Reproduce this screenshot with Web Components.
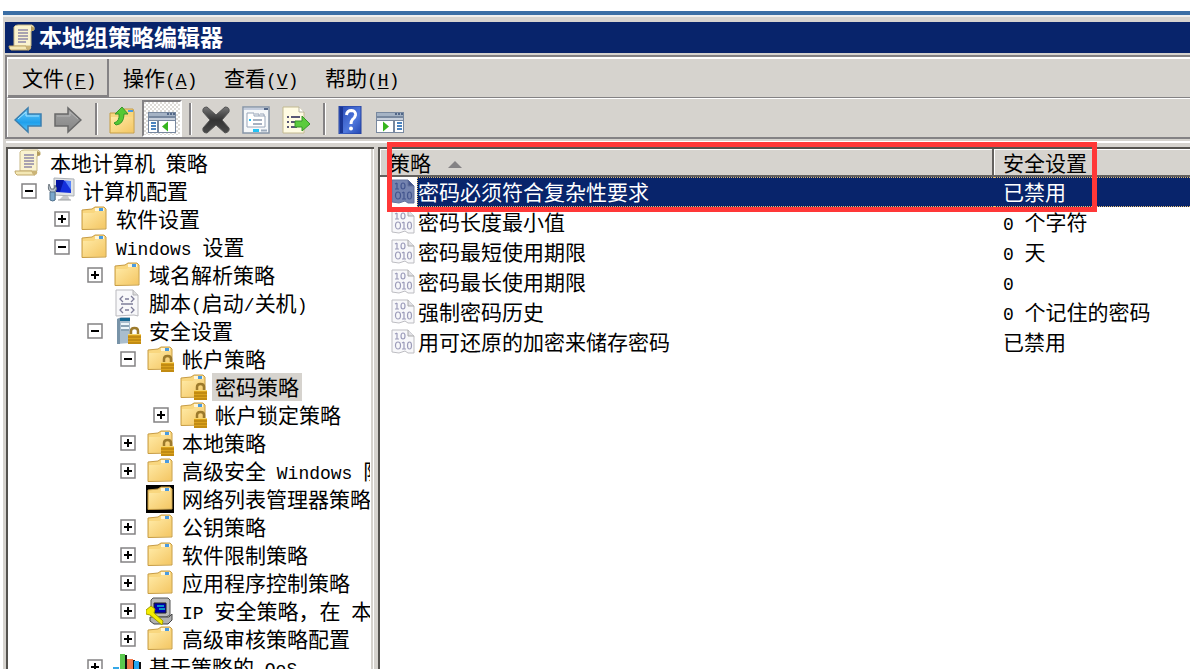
<!DOCTYPE html>
<html lang="zh-CN">
<head>
<meta charset="utf-8">
<title>本地组策略编辑器</title>
<style>
  html, body { margin: 0; height: 100%; background: #fff; }
  body {
    overflow: hidden;
    font: 21px/28px "Noto Sans CJK SC", sans-serif;
    color: #000;
    --face: #d6d3ce;
    --shadow: #848284;
    --navy: #08246b;
  }
</style>
</head>
<body>
<mmc-window>
  <title-bar slot="title">本地组策略编辑器</title-bar>
  <menu-bar slot="menu">
    <menu-item raised key="F">文件</menu-item>
    <menu-item key="A">操作</menu-item>
    <menu-item key="V">查看</menu-item>
    <menu-item key="H">帮助</menu-item>
  </menu-bar>
  <tool-bar slot="tools">
    <tool-button icon="back" label="后退"></tool-button>
    <tool-button icon="forward" label="前进"></tool-button>
    <tool-separator></tool-separator>
    <tool-button icon="up" label="上一级"></tool-button>
    <tool-button icon="treepane" label="显示控制台树" pressed></tool-button>
    <tool-separator></tool-separator>
    <tool-button icon="delete" label="删除"></tool-button>
    <tool-button icon="props" label="属性"></tool-button>
    <tool-button icon="export" label="导出列表"></tool-button>
    <tool-separator></tool-separator>
    <tool-button icon="help" label="帮助"></tool-button>
    <tool-button icon="actionpane" label="显示操作窗格"></tool-button>
  </tool-bar>
  <console-tree slot="tree">
    <tree-node level="0" icon="scroll">本地计算机 策略</tree-node>
    <tree-node level="1" icon="computer" state="open">计算机配置</tree-node>
    <tree-node level="2" icon="folder" state="closed">软件设置</tree-node>
    <tree-node level="2" icon="folder" state="open">Windows 设置</tree-node>
    <tree-node level="3" icon="folder" state="closed">域名解析策略</tree-node>
    <tree-node level="3" icon="script">脚本(启动/关机)</tree-node>
    <tree-node level="3" icon="server" state="open">安全设置</tree-node>
    <tree-node level="4" icon="locked" state="open">帐户策略</tree-node>
    <tree-node level="5" icon="locked" selected>密码策略</tree-node>
    <tree-node level="5" icon="locked" state="closed">帐户锁定策略</tree-node>
    <tree-node level="4" icon="locked" state="closed">本地策略</tree-node>
    <tree-node level="4" icon="folder" state="closed">高级安全 Windows 防</tree-node>
    <tree-node level="4" icon="blackfolder">网络列表管理器策略</tree-node>
    <tree-node level="4" icon="folder" state="closed">公钥策略</tree-node>
    <tree-node level="4" icon="folder" state="closed">软件限制策略</tree-node>
    <tree-node level="4" icon="folder" state="closed">应用程序控制策略</tree-node>
    <tree-node level="4" icon="ipsec" state="closed">IP 安全策略，在 本</tree-node>
    <tree-node level="4" icon="folder" state="closed">高级审核策略配置</tree-node>
    <tree-node level="3" icon="chart" state="closed">基于策略的 QoS</tree-node>
  </console-tree>
  <policy-list slot="list"></policy-list>
</mmc-window>

<script>
const folderBody = `
  <path d="M2 5 L12 4 L15 2 H24 L26 4 V24 L2 24.500 Z" fill="#f9d77f" stroke="#c79c45"/>
  <path d="M3 8 H14 L16 6 H25 V23 H3 Z" fill="url(#fg)"/>
  <path d="M15 3 H24 V6 H15 Z" fill="#fff6d8"/><path d="M19 3 H23 V6 H19 Z" fill="#4a9be0"/>`;
const padlock = `
  <path d="M18 18 V14 Q18 11 21.500 11 Q25 11 25 14 V18" fill="none" stroke="#9c7a2c" stroke-width="2.500"/>
  <path d="M15 17 H28 V27 H15 Z" fill="#dba21c"/><path d="M15 20 H28 M15 23 H28 M15 26 H28" stroke="#a87408"/>
  <path d="M15 17.500 H28" stroke="#f7d66a"/>`;
const binaryPage = `
  <path d="M3 2 H19 L25 8 V25 H19 L16 23 L10 25 L3 24 Z" fill="var(--page,#f8f8fa)" stroke="var(--edge,#bdbdc2)"/>
  <path d="M19 2 V8 H25" fill="var(--fold,#e2e2e6)" stroke="var(--edge,#aaa)"/>
  <g fill="none" stroke="var(--ink,#9c9cba)" stroke-width="1.200">
    <path d="M8 5 V11 M6 6 L8 5 M6 11 H10 M15 14 V21 M13 15 L15 14 M13 21 H17"/>
    <ellipse cx="14" cy="8" rx="2" ry="3"/><ellipse cx="9" cy="17.500" rx="2.500" ry="3.500"/><ellipse cx="20.500" cy="17.500" rx="2" ry="3.500"/>
  </g>`;
const scrollArt = `
  <path d="M6 3 Q7 1 10 1 H24 Q27 2 26 6 L23 7 V22 H6 Z" fill="#faf3cf" stroke="#c9b987"/>
  <path d="M23 2 Q27 3 26 6 L23 7 Z" fill="#b59c5c"/>
  <path d="M1 22 H18 Q18 25 21 26 H3 Q1 25 1 22 Z" fill="#f4e8b5" stroke="#c0a769"/>
  <path d="M18 22 H23 Q24 25 21 26 Q18 25 18 22" fill="#cbb477"/>
  <path d="M10 6 H20 M10 9 H20 M10 12 H20 M10 15 H20 M10 18 H18" stroke="#8e89a8" stroke-width="1.500"/>`;
const paneWindow = `
  <path d="M0 6 H28 V27 H0 Z" fill="#78889f"/><path d="M1 7 H27 V10 H1 Z" fill="#a5b3c5"/>
  <path d="M19 8 H21 M22 8 H24 M25 8 H27" stroke="#526788" stroke-width="2"/>
  <path d="M1 12 H27 V14 H1 Z" fill="#c8d0dc"/>`;

const ICONS = {
  scroll: scrollArt,
  folder: folderBody,
  locked: folderBody + padlock,
  blackfolder: `<path d="M0 0 H28 V28 H0 Z"/>` + folderBody,
  computer: `
    <path d="M7 1 L27 2 V19 L7 18 Z" fill="#dfe2e4" stroke="#abb0b5"/>
    <path d="M9 3 L24 4 V16 L9 15 Z" fill="#1430dc"/><path d="M9 3 H17 L13 15 H9 Z" fill="#0514a2"/><path d="M18 4 L24 4 V13 Z" fill="#5985fa"/>
    <path d="M16 19 H21 L23 23 H12 Z" fill="#c6c8ca"/><path d="M11 23 H24" stroke="#9a9da0"/>
    <path d="M2 7 Q0 13 4 15 V23 H8 V15 Q11 12 8 8 L7 12 H4 Z" fill="#bcc5cc" stroke="#6d7780"/>
    <path d="M3 15 H8 V23 Q6 25 3 23 Z" fill="#7ba7cb" stroke="#52738f"/>`,
  script: `
    <path d="M3 1 H20 L25 6 V27 L21 26 L3 27 Z" fill="#f8f8fa" stroke="#b9b9be"/><path d="M20 1 V6 H25" fill="#ddd" stroke="#b4b4b8"/>
    <path d="M10 7 L7 10 L10 13 M18 7 L21 10 L18 13 M12 10 H16 M8 15 H20 M10 18 L7 21 L10 24 M18 18 L21 21 L18 24 M12 21 H16" fill="none" stroke="#7e7d99" stroke-width="1.300"/>`,
  server: `
    <path d="M4 2 L8 0 H17 V26 L4 27 Z" fill="#a9bdcd"/><path d="M4 2 L7 1 V27 H4 Z" fill="#7893a8"/><path d="M7 1 H17 V4 H7 Z" fill="#176993"/>
    <path d="M8 7 H16 M8 11 H16" stroke="#edf6fa" stroke-width="2"/><path d="M8 9 H16 M8 13 H16" stroke="#6b879b"/>` + padlock,
  ipsec: `
    <path d="M7 1 H22 L24 3 V18 L20 20 H7 L5 17 V3 Z" fill="#b9b9b9" stroke="#555"/>
    <path d="M8 6 H20 V16 H8 Z" fill="#0000b0" stroke="#222"/><path d="M11 9 H18 M13 12 H19" stroke="#0a8fc8" stroke-width="2"/>
    <path d="M4 20 H23 L26 17 V23 L22 27 H8 L4 24 Z" fill="#b0b0b0" stroke="#444"/>
    <path d="M0 13 L5 9 L9 12 L8 16 L17 24 L16 28 L4 18 L0 17 Z" fill="#f4ec00" stroke="#a29b00"/>`,
  chart: `
    <path d="M0 14 H6 V28 H0 Z" fill="#35a8e8"/><path d="M12 2 H14 V28 H12 Z M20 7 H22 V28 H20 Z M26 9 H28 V28 H26 Z" fill="#111"/>
    <path d="M7 1 H12 V28 H7 Z" fill="#5bc84e"/><path d="M14 6 H20 V28 H14 Z" fill="#f0784c"/><path d="M21 8 H26 V28 H21 Z" fill="#25a5ef"/>`,
  binary: binaryPage,
  back: `<path d="M1 14 L14 2 V8 H27 V20 H14 V26 Z" fill="url(#bl)" stroke="#3c7fae" stroke-width="1.500"/><path d="M4 13 L12 6 V10 H25" fill="none" stroke="#a4e2ff"/>`,
  forward: `<path d="M27 14 L14 2 V8 H1 V20 H14 V26 Z" fill="url(#gr)" stroke="#696969" stroke-width="1.500"/><path d="M3 10 H16 V6 L24 13" fill="none" stroke="#b5b5b5"/>`,
  up: `<path d="M2 7 H13 L16 3 H25 L26 6 V27 H2 Z" fill="#f7d77f" stroke="#c79c45"/><path d="M3 11 H25 V26 H3 Z" fill="url(#fg)"/>
    <path d="M20 5 H25" stroke="#4a9be0" stroke-width="2"/>
    <path d="M6 17 Q12 15 11 8 H7 L14 1 L20 8 H16 Q16 18 8 19 Z" fill="#54c934" stroke="#38952a"/>`,
  treepane: paneWindow + `
    <path d="M1 15 H9 V26 H1 Z M11 15 H27 V26 H11 Z" fill="#fff"/><path d="M3 17 H8 M3 20 H8 M3 23 H8" stroke="#4b83bf" stroke-width="2"/>
    <path d="M14 20.500 L20 15.500 V25.500 Z" fill="#36b51d"/>`,
  actionpane: paneWindow + `
    <path d="M1 15 H17 V26 H1 Z M19 15 H27 V26 H19 Z" fill="#fff"/><path d="M21 17 H26 M21 20 H26 M21 23 H26" stroke="#4b83bf" stroke-width="2"/>
    <path d="M13 20.500 L7 15.500 V25.500 Z" fill="#36b51d"/>`,
  delete: `<path d="M5 1 L14 9 L23 1 Q28 1 27 6 L20 14 L27 22 Q28 26 23 27 L14 19 L5 27 Q0 27 1 22 L8 14 L1 6 Q0 1 5 1 Z" fill="url(#dk)" stroke="#555" stroke-linejoin="round"/>`,
  props: `<path d="M1 1 H27 V27 H1 Z" fill="#f6f8fa" stroke="#8795a8" stroke-width="1.500"/><path d="M2 3 H26" stroke="#c5cddd" stroke-width="2"/><path d="M22 3 H26" stroke="#536687" stroke-width="2"/>
    <path d="M5 7 H12 V10 H23 V21 H5 Z" fill="#fff" stroke="#98a5b8"/><path d="M13 8 H17 V10 M18 8 H22 V10" fill="none" stroke="#98a5b8"/>
    <path d="M7 14 H9" stroke="#28bdf0" stroke-width="2"/><path d="M11 14 H20 M11 18 H20" stroke="#8a98ad" stroke-width="1.500"/>
    <path d="M11 24.500 H17" stroke="#22c3f5" stroke-width="3"/><path d="M19 24.500 H25" stroke="#9cabbd" stroke-width="2"/>`,
  export: `<path d="M1 1 H17 L22 6 V27 H1 Z" fill="#fffbe3" stroke="#c3b98f"/><path d="M17 1 V6 H22" fill="#fff" stroke="#b5b09c"/>
    <path d="M5 11 H7 M5 16 H7 M5 21 H7 M9 11 H18 M9 16 H15 M9 21 H15" stroke="#595675" stroke-width="2"/>
    <path d="M13 15 H20 V10 L28 18 L20 25 V21 H13 Z" fill="#5bcb3d" stroke="#37942a"/>`,
  help: `<path d="M3 0 H25 V28 H3 Z" fill="url(#hp)" stroke="#24409c"/><path d="M4 1 H7 V27 H4 Z" fill="#1a3694"/>
    <path d="M10.500 9 Q11 4.500 15.500 4.500 Q20 5 19.500 9 Q19 12 16.500 13.500 Q15 15 15 18" fill="none" stroke="#fff" stroke-width="3"/><circle cx="15" cy="22.500" r="2" fill="#fff"/>`
};

const GRADIENTS = `<defs>
  <linearGradient id="fg" x1="0" y1="0" x2="1" y2="1"><stop stop-color="#ffeaa6"/><stop offset="1" stop-color="#f4c765"/></linearGradient>
  <linearGradient id="bl" x1="0" y1="0" x2="0" y2="1"><stop stop-color="#6bcbfa"/><stop offset=".6" stop-color="#1fa0ec"/><stop offset="1" stop-color="#5ac7fa"/></linearGradient>
  <linearGradient id="gr" x1="0" y1="0" x2="0" y2="1"><stop stop-color="#a2a2a2"/><stop offset="1" stop-color="#858585"/></linearGradient>
  <linearGradient id="dk" x1="0" y1="0" x2="0" y2="1"><stop stop-color="#777"/><stop offset=".5" stop-color="#333"/><stop offset="1" stop-color="#4a4a4a"/></linearGradient>
  <linearGradient id="hp" x1="0" y1="0" x2="1" y2="1"><stop stop-color="#2748b4"/><stop offset=".6" stop-color="#4f78dd"/><stop offset="1" stop-color="#2347b2"/></linearGradient>
</defs>`;

/* Half-width characters are set in a monospaced face, about half an ideograph wide. */
const LATIN = `.latin { font: 18px/1 "Liberation Mono", monospace; white-space: pre; }`;
const mixed = text => text.replace(/[\x20-\x7e]+/g, run => `<span class="latin">${run}</span>`);

function define(name, render) {
  customElements.define(name, class extends HTMLElement {
    connectedCallback() {
      if (this.shadowRoot) return;
      const template = document.createElement('template');
      template.innerHTML = render(this);
      this.attachShadow({ mode: 'open' }).append(template.content.cloneNode(true));
    }
  });
}

define('app-icon', el => `
  <style>:host { display: block; flex: none; width: 28px; height: 28px; } svg { display: block; width: 100%; height: 100%; }</style>
  <svg viewBox="0 0 28 28" aria-hidden="true">${GRADIENTS}${ICONS[el.getAttribute('name')]}</svg>`);

define('mmc-window', () => `
  <style>
    :host { display: flex; flex-direction: column; box-sizing: border-box; height: 100vh; padding: 11px 0 2px 3px; overflow: hidden; }
    .edge { flex: none; height: 4px; background: #3a6ea5; border-bottom: 2px solid #efefee; }
    .frame { flex: 1; min-height: 0; display: flex; flex-direction: column; background: var(--face); padding: 5px 0 0 2px; }
    .bars { flex: none; margin-top: 2px; border: solid var(--shadow); border-width: 2px 0 2px 2px; }
    .panes { flex: 1; min-height: 0; display: grid; grid-template-columns: 368px minmax(0, 1fr); column-gap: 4px; margin: 2px 0 0 1px; padding-top: 4px; border-top: 2px solid #fff; }
    ::slotted([slot=tree]), ::slotted([slot=list]) { border: solid #55534f; border-width: 2px 0 0 2px; background: #fff; min-width: 0; min-height: 0; }
  </style>
  <div class="edge"></div>
  <div class="frame">
    <slot name="title"></slot>
    <div class="bars"><slot name="menu"></slot><slot name="tools"></slot></div>
    <div class="panes"><slot name="tree"></slot><slot name="list"></slot></div>
  </div>`);

define('title-bar', () => `
  <style>
    :host { display: flex; align-items: center; gap: 3px; flex: none; height: 31px; padding-left: 3px; background: var(--navy); color: #fff; }
    h1 { margin: 0; padding-bottom: 3px; font-size: 23px; line-height: 28px; font-weight: 700; }
  </style>
  <app-icon name="scroll"></app-icon><h1><slot></slot></h1>`);

define('menu-bar', () => `
  <style>:host { display: flex; height: 41px; box-sizing: border-box; border-top: 2px solid #fff; border-left: 1px solid #fff; border-bottom: 1px solid var(--shadow); }</style>
  <slot></slot>`);

define('menu-item', el => `
  <style>
    :host { display: block; }
    button { box-sizing: border-box; min-width: 101px; height: 38px; padding: 0 0 2px 14px; border: 0; background: none; font: inherit; color: inherit; text-align: left; white-space: nowrap; }
    :host([raised]) button { padding-bottom: 0; border: solid var(--shadow); border-width: 0 2px 2px 0; }
    ${LATIN}
    u { text-underline-offset: 2px; }
  </style>
  <button type="button"><slot></slot><span class="latin">(<u>${el.getAttribute('key')}</u>)</span></button>`);

define('tool-bar', () => `
  <style>:host { display: flex; height: 39px; box-sizing: border-box; padding-top: 1px; border-top: 1px solid #fff; border-left: 1px solid #fff; }</style>
  <slot></slot>`);

define('tool-button', el => `
  <style>
    :host { display: block; }
    button { display: flex; align-items: center; justify-content: center; box-sizing: border-box; width: 40px; height: 37px; padding: 2px 0 0; border: 0; background: none; }
    :host([pressed]) button { border: 2px solid; border-color: var(--shadow) #fff #fff var(--shadow); background: repeating-conic-gradient(#fff 0 25%, #dddbd7 0 50%) 0 0 / 4px 4px; }
  </style>
  <button type="button" aria-label="${el.getAttribute('label')}"><app-icon name="${el.getAttribute('icon')}"></app-icon></button>`);

define('tool-separator', () => `
  <style>:host { display: block; width: 2px; height: 32px; margin: 3px 5px 2px 7px; background: var(--shadow); box-shadow: 1px 0 #fff; }</style>`);

define('console-tree', () => `
  <style>
    :host { display: block; overflow: hidden; box-sizing: border-box; background: linear-gradient(to left, #fff 0 1px, var(--face) 1px 3px, #fff 3px) !important; }
    nav { height: 100%; box-sizing: border-box; overflow: hidden; margin-right: 4px; }
  </style>
  <nav aria-label="控制台树"><slot></slot></nav>`);

define('tree-node', el => {
  const level = +el.getAttribute('level');
  const state = el.getAttribute('state');
  const toggle = state ? `<button type="button" aria-label="${state === 'open' ? '折叠' : '展开'}"><svg viewBox="0 0 16 16" aria-hidden="true">
      <path d="M1 1 H15 V15 H1 Z" fill="#fff" stroke="#848284" stroke-width="1.500"/><path d="M4 8 H12 ${state === 'open' ? '' : 'M8 4 V12'}" stroke="#000" stroke-width="2"/></svg></button>` : '';
  return `
  <style>
    :host { display: flex; align-items: center; height: 28px; padding-left: ${level ? level * 33 - 27 : 6}px; white-space: nowrap; }
    .toggle { flex: none; display: flex; box-sizing: border-box; width: ${level ? 33 : 0}px; padding-left: ${level ? 7 : 0}px; }
    button { width: 16px; height: 16px; padding: 0; border: 0; background: none; }
    svg { display: block; }
    .label { margin-left: 5px; padding: 0 3px 2px; line-height: 26px; }
    :host([selected]) .label { background: var(--face); }
    ${LATIN}
  </style>
  <div class="toggle">${toggle}</div>
  <app-icon name="${el.getAttribute('icon')}"></app-icon>
  <span class="label">${mixed(el.textContent)}</span>`;
});

const POLICIES = [
  ['密码必须符合复杂性要求', '已禁用'],
  ['密码长度最小值', '0 个字符'],
  ['密码最短使用期限', '0 天'],
  ['密码最长使用期限', '0'],
  ['强制密码历史', '0 个记住的密码'],
  ['用可还原的加密来储存密码', '已禁用']
];

define('policy-list', () => `
  <style>
    :host { display: block; position: relative; box-sizing: border-box; }
    table { width: 100%; border-collapse: separate; border-spacing: 0; table-layout: fixed; }
    .name { width: 614px; }
    th { box-sizing: border-box; height: 28px; padding: 0 0 0 9px; background: var(--face); border: solid #63615e; border-width: 0 0 2px; box-shadow: inset 1px 1px #fff; font-weight: 400; line-height: 25px; text-align: left; }
    th:first-child { border-right: 2px solid #63615e; }
    .sort { display: inline-block; margin-left: 17px; border: 7px solid transparent; border-top: 0; border-bottom: 7px solid var(--shadow); vertical-align: middle; }
    td { box-sizing: border-box; height: 30px; padding: 0 0 2px 9px; line-height: 26px; white-space: nowrap; }
    td:first-child { padding-bottom: 0; }
    .cell { display: flex; align-items: center; }
    .cell span { flex: 1; padding: 0 0 2px 1px; line-height: 26px; border: dotted transparent; border-width: 1px 0; }
    .selected td:last-child, .selected .cell span { background: var(--navy); color: #fff; }
    .selected td:last-child { border: dotted #e2bd72; border-width: 1px 0; }
    .selected .cell span { border: dotted #e2bd72; border-width: 1px 0 1px 1px; padding-left: 0; }
    .selected app-icon { --page: #7584b0; --edge: #63709c; --fold: #46578c; --ink: #43558e; }
    .mark { position: absolute; left: 7px; top: -7px; width: 710px; height: 70px; box-sizing: border-box; border: 5px solid #ff3838; pointer-events: none; }
    ${LATIN}
  </style>
  <table>
    <colgroup><col class="name"><col></colgroup>
    <thead><tr><th scope="col">策略<i class="sort"></i></th><th scope="col">安全设置</th></tr></thead>
    <tbody>${POLICIES.map(([name, value], i) => `
      <tr${i ? '' : ' class="selected"'}><td><div class="cell"><app-icon name="binary"></app-icon><span>${name}</span></div></td><td>${mixed(value)}</td></tr>`).join('')}
    </tbody>
  </table>
  <div class="mark"></div>`);
</script>
</body>
</html>
